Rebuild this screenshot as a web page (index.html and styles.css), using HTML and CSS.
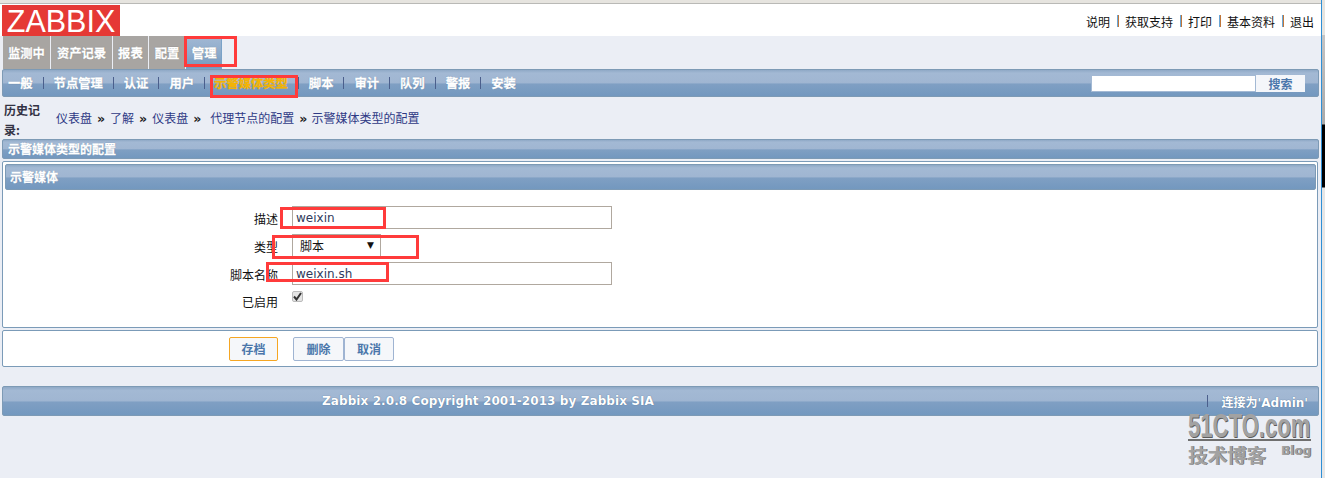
FILE: index.html
```html
<!DOCTYPE html>
<html lang="zh">
<head>
    <meta charset="UTF-8">
    <title>Zabbix</title>
    <link rel="stylesheet" href="styles.css">
</head>
<body>
    <div class="page">
        <!-- Logo and top links -->
        <header class="top-bar">
            <div class="logo">ZABBIX</div>
            <nav class="top-links">
                <a>说明</a><i></i><a>获取支持</a><i></i><a>打印</a><i></i><a>基本资料</a><i></i><a>退出</a>
            </nav>
        </header>

        <div class="tabs">
            <a class="tab">监测中</a>
            <a class="tab">资产记录</a>
            <a class="tab">报表</a>
            <a class="tab">配置</a>
            <a class="tab tab-active">管理</a>
        </div>

        <div class="bar sub-nav">
            <a>一般</a><i></i><a>节点管理</a><i></i><a>认证</a><i></i><a>用户</a><i></i>
            <a class="current">示警媒体类型</a><i></i><a>脚本</a><i></i><a>审计</a><i></i><a>队列</a><i></i><a>警报</a><i></i><a>安装</a>
            <div class="search">
                <input class="search-input" type="text" aria-label="搜索">
                <button class="search-btn">搜索</button>
            </div>
        </div>

        <div class="history">
            <div class="history-label">历史记录:</div>
            <div class="crumbs">
                <a>仪表盘</a><b>»</b><a>了解</a><b>»</b><a>仪表盘</a><b class="wide">»</b><a>代理节点的配置</a><b class="tight">»</b><a>示警媒体类型的配置</a>
            </div>
        </div>

        <div class="bar section-title">示警媒体类型的配置</div>

        <section class="panel form-panel">
            <div class="bar panel-title">示警媒体</div>
            <div class="form-grid">
                <label class="field-label">描述</label>
                <div class="field-value"><input class="text-input" type="text" value="weixin"></div>
                <label class="field-label">类型</label>
                <div class="field-value">
                    <div class="select-box">脚本<span class="arrow">▼</span></div>
                </div>
                <label class="field-label">脚本名称</label>
                <div class="field-value"><input class="text-input" type="text" value="weixin.sh"></div>
                <label class="field-label enabled-label">已启用</label>
                <div class="field-value">
                    <span class="check">
                        <svg width="9" height="9" viewBox="0 0 9 9"><path d="M1 4.5 L3.5 7.5 L8 1" fill="none" stroke="#333" stroke-width="2"/></svg>
                    </span>
                </div>
            </div>
        </section>

        <section class="panel actions">
            <button class="btn btn-save">存档</button>
            <div class="btn-group">
                <button class="btn btn-first">删除</button>
                <button class="btn">取消</button>
            </div>
        </section>

        <footer class="bar page-footer">
            <span class="copyright">Zabbix 2.0.8 Copyright 2001-2013 by Zabbix SIA</span>
            <span class="connected"><i></i>连接为'Admin'</span>
        </footer>
    </div>

    <!-- Sliver of the window behind, at the right edge -->
    <div class="edge"></div>

    <!-- Red annotation boxes drawn over the screenshot -->
    <div class="mark mark-tab"></div>
    <div class="mark mark-nav"></div>
    <div class="mark mark-desc"></div>
    <div class="mark mark-type"></div>
    <div class="mark mark-script"></div>

    <!-- Watermark -->
    <div class="watermark">
        <div class="wm-site">51CTO.com</div>
        <div class="wm-rule"></div>
        <div class="wm-sub"><span>技术博客</span><span class="wm-blog">Blog</span></div>
    </div>
</body>
</html>
```

FILE: styles.css
```css
:root {
    --page-bg: #ebeef5;
    --line: #7b9bb8;
    --cjk: "Noto Sans CJK SC", sans-serif;
}

html, body {
    margin: 0;
    padding: 0;
}

body {
    height: 478px;
    overflow: hidden;
    position: relative;
    background-color: #eeeeee;
    font-family: "DejaVu Sans", "Noto Sans CJK SC", sans-serif;
    font-size: 12px;
    color: #222;
}

.page {
    width: 1322px;
    height: 478px;
    box-sizing: border-box;
    padding-top: 4px;
    background-color: var(--page-bg);
    border-right: 1px solid #2e8fd6;
    box-shadow: inset 0 3px 0 #e6e4df, inset 0 4px 0 #b9b9b6;
}

.edge {
    position: absolute;
    left: 1322px;
    top: 0;
    width: 3px;
    height: 478px;
    background: linear-gradient(to bottom, #e6e4df 0, #e6e4df 35px, #c4c4c4 35px, #a9a9a9 124px, #000 125px, #000 187px, #e6e6e6 188px, #e6e6e6 100%);
}

/* Shared blue bar */
.bar {
    background: linear-gradient(to bottom, #8fa9c6 0, #a3b9d4 12%, #a0b6d2 48%, #7f9fc3 55%, #7398bf 100%);
    border: 1px solid #7d9ab5;
    border-radius: 2px;
    box-sizing: border-box;
    color: #fff;
    font-weight: bold;
    -webkit-text-stroke: 0.3px #fff;
    text-shadow: 0 0 1px #3d5f85;
}

/* Top */
.top-bar {
    height: 32px;
    background-color: #fff;
    display: flex;
    justify-content: space-between;
    padding-left: 2px;
    padding-right: 7px;
}

.logo {
    width: 118px;
    height: 31px;
    margin-top: 1px;
    background-color: #e53935;
    color: #fff;
    font-family: "Liberation Sans", sans-serif;
    font-size: 30.5px;
    line-height: 33px;
    text-align: center;
}

.top-links {
    display: flex;
    align-items: center;
    padding-top: 2px;
    font-family: var(--cjk);
    font-size: 12px;
    color: #111;
}

.top-links i {
    width: 2px;
    height: 12px;
    margin: 0 6px 0 7px;
    background: linear-gradient(to right, #6aa6d6 50%, #c0763a 50%);
}

/* Tabs */
.tabs {
    height: 33px;
    box-sizing: border-box;
    padding: 0 0 0 2.5px;
    display: flex;
    align-items: stretch;
}

.tab {
    margin-right: 1px;
    padding: 1px 5.5px 0;
    background-color: #a8a5a2;
    color: #fff;
    font-family: var(--cjk);
    font-weight: bold;
    font-size: 12.3px;
    line-height: 32px;
    white-space: nowrap;
    -webkit-text-stroke: 0.3px #fff;
    text-shadow: 0 0 1px #555;
}

.tab-active {
    width: 36px;
    box-sizing: border-box;
    margin-top: 3px;
    padding: 0 5px;
    background: linear-gradient(to bottom, #9fb6d2 0, #8dabcb 50%, #7398bf 100%);
    border: 1px solid #7aa2c8;
    border-top: 0;
    line-height: 28px;
}

/* Sub nav */
.sub-nav {
    height: 28px;
    margin-left: 2px;
    width: 1317px;
    display: flex;
    align-items: center;
    padding-left: 5px;
    font-family: var(--cjk);
    font-size: 12.3px;
}

.sub-nav a {
    white-space: nowrap;
}

.sub-nav i {
    width: 1px;
    height: 12px;
    margin: 0 10px;
    background-color: #4b5f8c;
}

.sub-nav .current {
    color: #f5b400;
    -webkit-text-stroke: 0.3px #f5b400;
    text-shadow: none;
    margin-left: -1px;
}

.search {
    margin-left: auto;
    margin-right: 13px;
    display: flex;
    height: 17px;
}

.search-input {
    width: 165px;
    height: 17px;
    box-sizing: border-box;
    border: 1px solid #a3b9d4;
    background-color: #fff;
    padding: 0;
}

.search-btn {
    width: 49px;
    height: 17px;
    padding: 0;
    border: 0;
    background-color: #f4f6fa;
    color: #4b77ab;
    font-family: var(--cjk);
    font-size: 12px;
    font-weight: bold;
    line-height: 17px;
    -webkit-text-stroke: 0;
    text-shadow: none;
}

/* Breadcrumbs */
.history {
    height: 42px;
    display: flex;
    padding-left: 4px;
    box-sizing: border-box;
    font-family: var(--cjk);
}

.history-label {
    width: 40px;
    padding-top: 3px;
    font-size: 12px;
    font-weight: bold;
    line-height: 20px;
    color: #334;
}

.crumbs {
    padding: 12px 0 0 12px;
    color: #2f3a85;
    font-size: 12px;
    line-height: 18px;
    white-space: nowrap;
}

.crumbs b {
    margin: 0 5px;
    color: #222;
    font-family: "DejaVu Sans", sans-serif;
    font-size: 12.5px;
}

.crumbs b.wide {
    margin-right: 9px;
}

.crumbs b.tight {
    margin-right: 4px;
}

/* Section bars */
.section-title {
    height: 20px;
    width: 1317px;
    margin-left: 2px;
    padding-left: 5px;
    font-family: var(--cjk);
    line-height: 18px;
}

.panel {
    width: 1316px;
    margin-left: 2px;
    box-sizing: border-box;
    background-color: #fff;
    border: 1px solid var(--line);
    border-radius: 2px;
}

.form-panel {
    height: 167px;
    margin-top: 2px;
    padding: 2px 1px 2px 2px;
}

.panel-title {
    height: 26px;
    padding-left: 4px;
    font-family: var(--cjk);
    line-height: 24px;
}

/* Form */
.form-grid {
    display: grid;
    grid-template-columns: 273px 1fr;
    grid-auto-rows: 28px;
    padding-top: 16px;
}

.field-label {
    padding-top: 4px;
    text-align: right;
    font-family: var(--cjk);
    font-size: 12px;
    line-height: 18px;
    color: #111;
}

.enabled-label {
    padding-top: 3px;
}

.field-value {
    padding-left: 14px;
}

.text-input {
    display: block;
    width: 320px;
    height: 23px;
    box-sizing: border-box;
    border: 1px solid #b0a89f;
    padding: 0 3px;
    font-family: "DejaVu Sans", sans-serif;
    font-size: 12px;
    color: #2f3a5c;
    background-color: #fff;
}

.select-box {
    width: 89px;
    height: 23px;
    box-sizing: border-box;
    padding: 0 0 0 7px;
    border: 1px solid #b0a89f;
    border-bottom-color: #fff;
    position: relative;
    font-family: var(--cjk);
    font-size: 12px;
    line-height: 21px;
    color: #111;
}

.arrow {
    position: absolute;
    right: 6px;
    top: 0;
    font-size: 9px;
    color: #111;
    font-family: "DejaVu Sans", sans-serif;
}

.check {
    display: flex;
    align-items: center;
    justify-content: center;
    width: 11px;
    height: 11px;
    margin-top: 1px;
    box-sizing: border-box;
    border: 1px solid #bbb;
    border-radius: 2px;
    background-color: #e4e4e4;
}

/* Action buttons */
.actions {
    height: 37px;
    margin-top: 2px;
    display: flex;
    align-items: center;
    padding-left: 226px;
}

.btn {
    width: 50px;
    height: 24px;
    padding: 0;
    box-sizing: border-box;
    border: 1px solid #9fb4d2;
    border-radius: 2px;
    background-color: #f5f7fa;
    color: #4b77ab;
    font-family: var(--cjk);
    font-size: 12px;
    font-weight: bold;
}

.btn-save {
    width: 49px;
    border-color: #f5a623;
    margin-right: 15px;
}

.btn-first {
    width: 51px;
}

.btn-group {
    display: flex;
}

/* Footer */
.page-footer {
    height: 30px;
    width: 1317px;
    margin-top: 19px;
    margin-left: 2px;
    padding-left: 319px;
    display: flex;
    align-items: center;
    justify-content: space-between;
    padding-right: 10px;
    font-size: 12px;
    -webkit-text-stroke: 0;
}

.copyright {
    letter-spacing: 0.09px;
}

.connected {
    display: flex;
    align-items: center;
}

.connected i {
    width: 1px;
    height: 12px;
    margin-right: 14px;
    background-color: #4b5f8c;
}

/* Annotation boxes */
.mark {
    position: absolute;
    box-sizing: border-box;
    border: 3px solid #ff3b3b;
}

.mark-tab { left: 184px; top: 36px; width: 53px; height: 31px; }
.mark-nav { left: 210px; top: 75px; width: 88px; height: 23px; }
.mark-desc { left: 280px; top: 207px; width: 106px; height: 22px; }
.mark-type { left: 272px; top: 235px; width: 147px; height: 24px; }
.mark-script { left: 266px; top: 262px; width: 123px; height: 20px; }

/* Watermark */
.watermark {
    position: absolute;
    left: 1188px;
    top: 412px;
    width: 123px;
    color: #a2a2a2;
    font-weight: bold;
}

.wm-site {
    width: 123px;
    font-family: "Liberation Sans", sans-serif;
    font-size: 34px;
    line-height: 26px;
    white-space: nowrap;
    transform: scaleX(0.65);
    transform-origin: left top;
    text-shadow: 1px 1px 0 #5c5c5c;
}

.wm-rule {
    height: 2px;
    margin-top: 1px;
    background-color: #6f6f6f;
}

.wm-sub {
    display: flex;
    justify-content: space-between;
    margin-top: 1px;
    font-family: var(--cjk);
    font-size: 19.5px;
    line-height: 26px;
    text-shadow: 1px 0 0 #777;
}

.wm-blog {
    font-family: "DejaVu Sans", sans-serif;
    font-size: 12px;
    line-height: 18px;
}
```
